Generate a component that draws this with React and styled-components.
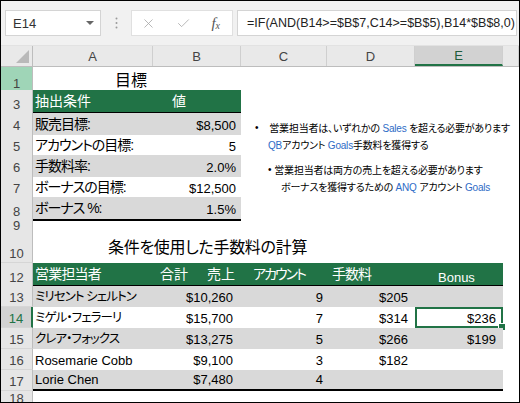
import React from 'react';
import styled, { createGlobalStyle, css } from 'styled-components';
import { X, Check } from 'lucide-react';

const FONT = `"Liberation Sans", "Noto Sans CJK JP", sans-serif`;
const GREEN = '#217346';
const COLS = '32px 120px 88px 86px 88px 88px 1fr';

const GlobalStyle = createGlobalStyle`
  html, body { margin: 0; padding: 0; background: #fff; }
  body { font-family: ${FONT}; font-feature-settings: "palt"; }
  * { box-sizing: border-box; }
`;

const Window = styled.div`
  width: 520px;
  height: 403px;
  border: 1px solid #000;
  background: #fff;
  overflow: hidden;
  display: flex;
  flex-direction: column;
`;

/* formula bar */
const Toolbar = styled.div`
  height: 45px;
  flex: none;
  display: flex;
  align-items: center;
  padding-left: 4px;
  background: #f1f1f1;
  border-bottom: 1px solid #e2e2e2;
`;

const NameBox = styled.div`
  width: 96px;
  height: 26px;
  display: flex;
  align-items: center;
  justify-content: space-between;
  padding: 0 6px 0 7px;
  background: #fff;
  border: 1px solid #d4d4d4;
  font-size: 13px;
  color: #333;
`;

const Caret = styled.span`
  width: 0;
  height: 0;
  border-left: 4px solid transparent;
  border-right: 4px solid transparent;
  border-top: 4px solid #666;
`;

const Grip = styled.div`
  width: 30px;
  display: flex;
  justify-content: center;
`;

const FnBox = styled.div`
  width: 102px;
  height: 26px;
  display: flex;
  align-items: center;
  justify-content: space-between;
  padding: 0 12px 0 9px;
  background: #fff;
  border: 1px solid #e0e0e0;
  color: #a8a8a8;
`;

const Fx = styled.span`
  font-family: "Liberation Serif", serif;
  font-style: italic;
  font-size: 15px;
  color: #555;
  sub {
    font-size: 10px;
    vertical-align: -1px;
  }
`;

const FormulaBox = styled.div`
  flex: 1;
  height: 26px;
  margin: 0 2px 0 4px;
  display: flex;
  align-items: center;
  padding-left: 9px;
  background: #fff;
  border: 1px solid #d4d4d4;
  font-size: 12.5px;
  color: #222;
  white-space: nowrap;
  overflow: hidden;
`;

/* sheet */
const Sheet = styled.div`
  position: relative;
  flex: 1;
  display: flex;
  flex-direction: column;
`;

const HeaderBar = styled.div`
  display: grid;
  grid-template-columns: ${COLS};
  height: 21px;
  flex: none;
  background: #e9e9e9;
  border-bottom: 1px solid #bdbdbd;
`;

const Corner = styled.div`
  display: flex;
  align-items: flex-end;
  justify-content: flex-end;
  padding: 0 3px 3px 0;
  border-right: 1px solid #bdbdbd;
`;

const ColHead = styled.div`
  display: flex;
  align-items: center;
  justify-content: center;
  font-size: 13px;
  color: #444;
  border-right: 1px solid #cfcfcf;
  ${(p) => p.$selected && css`
    background: #d2d2d2;
    color: #1e5c3a;
    border-bottom: 2px solid ${GREEN};
  `}
`;

const Row = styled.div`
  display: grid;
  grid-template-columns: ${COLS};
  height: ${(p) => p.$h}px;
  flex: ${(p) => (p.$grow ? 1 : 'none')};
`;

const RowHead = styled.div`
  display: flex;
  align-items: flex-end;
  justify-content: center;
  padding-bottom: 1px;
  font-size: 13px;
  color: #444;
  background: #e6e6e6;
  border-right: 1px solid #bdbdbd;
  border-bottom: 1px solid #d6d6d6;
  ${(p) => p.$highlight && css`background: #9fd5b7;`}
  ${(p) => p.$selected && css`
    background: #d2d2d2;
    color: ${GREEN};
    border-right: 2px solid ${GREEN};
  `}
`;

const Cell = styled.div`
  position: relative;
  display: flex;
  align-items: flex-end;
  justify-content: ${(p) => (p.$right ? 'flex-end' : 'flex-start')};
  gap: ${(p) => p.$gap || 0}px;
  grid-column: span ${(p) => p.$span || 1};
  padding: 0 ${(p) => p.$pr ?? 2}px ${(p) => p.$pb ?? 2}px ${(p) => p.$pl ?? 2}px;
  font-size: ${(p) => p.$size || 14}px;
  letter-spacing: ${(p) => p.$tight || 0}px;
  white-space: nowrap;
  color: #000;
  ${(p) => p.$fill === 'gray' && css`background: #d9d9d9;`}
  ${(p) => p.$fill === 'green' && css`background: ${GREEN}; color: #fff;`}
  ${(p) => p.$rule && css`border-bottom: 2px solid #000;`}
  ${(p) => p.$selected && css`
    box-shadow: inset 0 0 0 2px ${GREEN};
    &::after {
      content: '';
      position: absolute;
      right: -3px;
      bottom: -3px;
      width: 6px;
      height: 6px;
      background: ${GREEN};
      border: 1px solid #fff;
    }
  `}
`;

/* floating text box */
const Note = styled.div`
  position: absolute;
  left: 254px;
  top: 73px;
  display: flex;
  flex-direction: column;
  gap: 8px;
  font-size: 10px;
  letter-spacing: -0.2px;
  color: #000;
`;

const Para = styled.div`
  display: flex;
  flex-direction: column;
`;

const NoteLine = styled.div`
  height: 17px;
  display: flex;
  align-items: center;
  gap: ${(p) => p.$gap || 0}px;
  padding-left: ${(p) => p.$indent || 0}px;
  white-space: nowrap;
`;

const Bullet = styled.span`
  font-size: 10px;
`;

const Blue = styled.span`
  color: #2e6bc6;
  font-size: 10px;
`;

const goals = [
  ['販売目標:', '$8,500'],
  ['アカウントの目標:', '5'],
  ['手数料率:', '2.0%'],
  ['ボーナスの目標:', '$12,500'],
  ['ボーナス %:', '1.5%'],
];

const reps = [
  ['ミリセント シェルトン', '$10,260', '9', '$205', '', true],
  ['ミゲル・フェラーリ', '$15,700', '7', '$314', '$236', true],
  ['クレア・フォックス', '$13,275', '5', '$266', '$199', true],
  ['Rosemarie Cobb', '$9,100', '3', '$182', '', false],
  ['Lorie Chen', '$7,480', '4', '', '', false],
];

const App = () => (
  <>
    <GlobalStyle />
    <Window>
      <Toolbar>
        <NameBox>
          E14
          <Caret />
        </NameBox>
        <Grip>
          <svg width="3" height="12" viewBox="0 0 3 12">
            <circle cx="1.5" cy="1.5" r="1" fill="#9a9a9a" />
            <circle cx="1.5" cy="6" r="1" fill="#9a9a9a" />
            <circle cx="1.5" cy="10.5" r="1" fill="#9a9a9a" />
          </svg>
        </Grip>
        <FnBox>
          <X size={15} strokeWidth={1.3} />
          <Check size={15} strokeWidth={1.3} />
          <Fx>f<sub>x</sub></Fx>
        </FnBox>
        <FormulaBox>=IF(AND(B14&gt;=$B$7,C14&gt;=$B$5),B14*$B$8,0)</FormulaBox>
      </Toolbar>

      <Sheet>
        <HeaderBar>
          <Corner>
            <svg width="13" height="13" viewBox="0 0 13 13">
              <path d="M13 0 L13 13 L0 13 Z" fill="#b9b9b9" />
            </svg>
          </Corner>
          <ColHead>A</ColHead>
          <ColHead>B</ColHead>
          <ColHead>C</ColHead>
          <ColHead>D</ColHead>
          <ColHead $selected>E</ColHead>
          <ColHead />
        </HeaderBar>

        <Row $h={23}>
          <RowHead $highlight>1</RowHead>
          <Cell $span={2} $pl={82} $size={16}>目標</Cell>
        </Row>
        <Row $h={23}>
          <RowHead>3</RowHead>
          <Cell $fill="green" $rule>抽出条件</Cell>
          <Cell $fill="green" $rule $pl={19}>値</Cell>
        </Row>
        {goals.map(([label, value], i) => (
          <Row $h={21} key={label}>
            <RowHead>{i + 4}</RowHead>
            <Cell $fill={i % 2 === 0 ? 'gray' : undefined} $rule={i === 4} $tight={-1}>
              {label}
            </Cell>
            <Cell $fill={i % 2 === 0 ? 'gray' : undefined} $rule={i === 4} $right $pr={5} $size={13}>
              {value}
            </Cell>
          </Row>
        ))}
        <Row $h={16}>
          <RowHead>9</RowHead>
        </Row>
        <Row $h={29}>
          <RowHead>10</RowHead>
          <Cell $span={4} $pl={75} $size={16} $pb={5} $tight={-0.3}>
            条件を使用した手数料の計算
          </Cell>
        </Row>
        <Row $h={23}>
          <RowHead>12</RowHead>
          <Cell $fill="green" $rule $tight={-0.8}>営業担当者</Cell>
          <Cell $fill="green" $rule $pl={7} $gap={19}>
            <span>合計</span>
            <span>売上</span>
          </Cell>
          <Cell $fill="green" $rule $pl={12} $tight={-2}>アカウント</Cell>
          <Cell $fill="green" $rule $pl={5} $tight={-1}>手数料</Cell>
          <Cell $fill="green" $rule $pl={23} $pb={0} $size={13}>Bonus</Cell>
        </Row>
        {reps.map(([name, sales, accounts, fee, bonus, jp], i) => {
          const fill = i % 2 === 0 ? 'gray' : undefined;
          const last = i === reps.length - 1;
          return (
            <Row $h={21} key={name}>
              <RowHead $selected={i === 1}>{i + 13}</RowHead>
              <Cell $fill={fill} $rule={last} $size={jp ? 12.5 : 13} $tight={jp ? -0.9 : 0}>
                {name}
              </Cell>
              <Cell $fill={fill} $rule={last} $right $pr={8} $size={13}>{sales}</Cell>
              <Cell $fill={fill} $rule={last} $right $pr={4} $size={13}>{accounts}</Cell>
              <Cell $fill={fill} $rule={last} $right $pr={7} $size={13}>{fee}</Cell>
              <Cell $fill={fill} $rule={last} $right $pr={7} $size={13} $selected={i === 1}>
                {bonus}
              </Cell>
            </Row>
          );
        })}
        <Row $grow>
          <RowHead>18</RowHead>
        </Row>

        <Note>
          <Para>
            <NoteLine $gap={11}>
              <Bullet>•</Bullet>
              <span>営業担当者は、いずれかの <Blue>Sales</Blue> を超える必要があります</span>
            </NoteLine>
            <NoteLine $indent={13}>
              <span><Blue>QB</Blue>アカウント <Blue>Goals</Blue>手数料を獲得する</span>
            </NoteLine>
          </Para>
          <Para>
            <NoteLine $indent={13} $gap={3}>
              <Bullet>•</Bullet>
              <span>営業担当者は両方の売上を超える必要があります</span>
            </NoteLine>
            <NoteLine $indent={26}>
              <span>ボーナスを獲得するための <Blue>ANQ</Blue> アカウント <Blue>Goals</Blue></span>
            </NoteLine>
          </Para>
        </Note>
      </Sheet>
    </Window>
  </>
);

export default App;
